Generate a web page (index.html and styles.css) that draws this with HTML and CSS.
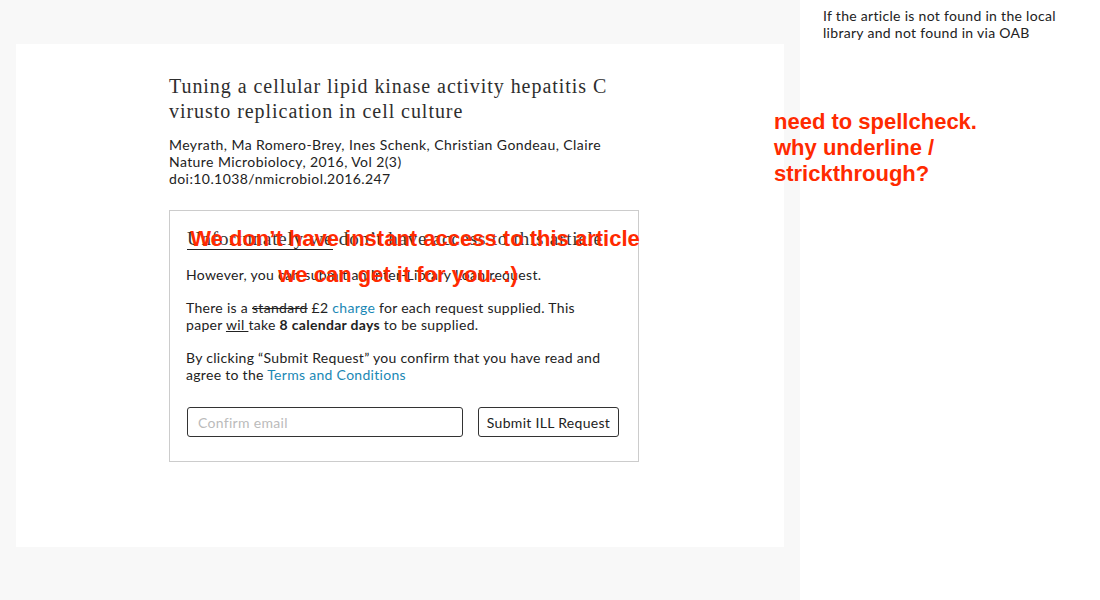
FILE: index.html
```html
<!DOCTYPE html>
<html>
<head>
<meta charset="utf-8">
<link rel="stylesheet" href="styles.css">
</head>
<body>
<div class="page">
  <main class="main">
    <section class="card">
      <div class="article">
        <h1 class="title">Tuning a cellular lipid kinase activity hepatitis C virusto replication in cell culture</h1>
        <p class="meta">Meyrath, Ma Romero-Brey, Ines Schenk, Christian Gondeau, Claire<br>Nature Microbiolocy, 2016, Vol 2(3)<br>doi:10.1038/nmicrobiol.2016.247</p>
        <div class="box">
          <h2 class="box-title"><span class="ul">Unfortunately we</span> don’t have access to this article</h2>
          <p class="txt">However, you can submit an Inter-Library Loan request.</p>
          <p class="txt">There is a <s>standard</s> £2 <a class="link">charge</a> for each request supplied. This paper <u>wil </u>take <b>8 calendar days</b> to be supplied.</p>
          <p class="txt">By clicking “Submit Request” you confirm that you have read and agree to the <a class="link">Terms and Conditions</a></p>
          <div class="form">
            <input class="email" type="text" placeholder="Confirm email">
            <button class="submit">Submit ILL Request</button>
          </div>
          <div class="note note-center">
            <div class="note-line">We don’t have instant access to this article</div>
            <div class="note-line note-line2">we can get it for you. :)</div>
          </div>
        </div>
      </div>
    </section>
  </main>
  <aside class="side">
    <p class="side-text">If the article is not found in the local library and not found in via OAB</p>
  </aside>
  <div class="note note-right">need to spellcheck.<br>why underline /<br>strickthrough?</div>
</div>
</body>
</html>
```
FILE: styles.css
```css
* { box-sizing: border-box; }
html, body { margin: 0; padding: 0; }
body { width: 1100px; height: 600px; overflow: hidden; background: #fff; }
.page { display: flex; height: 600px; position: relative; }
.main { width: 800px; background: #f8f8f8; padding: 44px 16px 53px 16px; }
.card { background: #fff; height: 503px; padding: 30px 0 0 153px; }
.article { width: 470px; }
.title {
  font-family: "Liberation Serif", serif; font-weight: normal;
  font-size: 20px; line-height: 25px; color: #2e2e2e; margin: 0 0 12px 0;
  letter-spacing: 0.95px; max-width: 450px;
}
.meta, .txt, .side-text, .email, .submit {
  font-family: "Lato", "Open Sans", sans-serif;
  letter-spacing: 0.3px;
}
.meta { font-size: 14px; line-height: 17px; color: #222; margin: 0 0 23px 0; letter-spacing: 0.42px; }
.box { position: relative; border: 1px solid #cccccc; width: 470px; height: 252px; padding: 16px 16px 0 16px; }
.box-title {
  font-family: "Liberation Serif", serif; font-weight: normal;
  font-size: 19px; line-height: 24px; color: #333; margin: 0 0 15px 1px;
  letter-spacing: 0.8px;
}
.ul { border-bottom: 1px solid #222; }
.txt { font-size: 14px; line-height: 17px; color: #222; margin: 0 0 16px 0; max-width: 425px; }
.txt b { font-weight: bold; }
.link { color: #1a88b5; text-decoration: none; }
.form { display: flex; justify-content: space-between; margin-top: 24px; padding: 0 3px 0 1px; }
.email {
  width: 276px; height: 30px; border: 1px solid #333; border-radius: 3px;
  padding: 0 10px; font-size: 14px; color: #222; outline: none;
}
.email::placeholder { color: #bbb; }
.submit {
  width: 141px; height: 30px; border: 1px solid #333; border-radius: 3px;
  background: #fff; font-size: 14px; color: #222; padding: 0;
}
.side { width: 300px; padding: 7px 20px 0 23px; }
.side-text { font-size: 14px; line-height: 17px; color: #222; margin: 0; width: 240px; }
.note {
  position: absolute; font-family: "Liberation Sans", Arial, sans-serif;
  font-weight: bold; color: #ff2a00; font-size: 22px;
}
.note-center { left: 20px; top: 10px; width: 450px; text-align: center; line-height: 36px; }
.note-line { white-space: nowrap; }
.note-line2 { margin-right: 34px; }
.note-right { left: 774px; top: 109px; line-height: 26px; }
```
